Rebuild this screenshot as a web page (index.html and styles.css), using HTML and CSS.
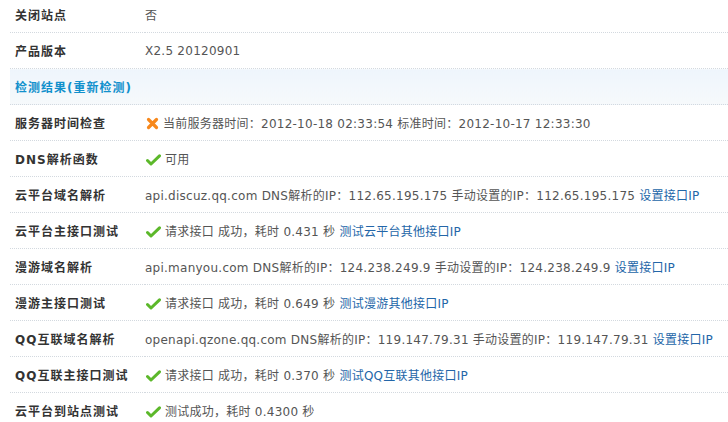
FILE: index.html
```html
<!DOCTYPE html>
<html lang="zh-CN">
<head>
  <meta charset="UTF-8" />
  <title>站点信息</title>
  <link rel="stylesheet" href="styles.css">
</head>
<body>
  <div class="wrap">
    <table class="tb">
      <tr>
        <td class="lbl">关闭站点</td>
        <td class="val">否</td>
      </tr>
      <tr>
        <td class="lbl">产品版本</td>
        <td class="val">X2.5 20120901</td>
      </tr>
      <tr class="partition">
        <td colspan="2">检测结果(重新检测)</td>
      </tr>
      <tr>
        <td class="lbl">服务器时间检查</td>
        <td class="val">
          <svg class="ico" width="13" height="13" viewBox="0 0 13 13"><path d="M2.5 2.5 L10.5 10.5 M10.5 2.5 L2.5 10.5" stroke="#f7881c" stroke-width="3.2" stroke-linecap="round"/></svg>当前服务器时间：2012-10-18 02:33:54 标准时间：2012-10-17 12:33:30
        </td>
      </tr>
      <tr>
        <td class="lbl">DNS解析函数</td>
        <td class="val"><svg class="ico" width="15" height="12" viewBox="0 0 15 12"><path d="M1.5 6.5 L5 10 L13.5 1.8" fill="none" stroke="#5cb82a" stroke-width="3" stroke-linecap="round" stroke-linejoin="round"/></svg>可用</td>
      </tr>
      <tr>
        <td class="lbl">云平台域名解析</td>
        <td class="val">api.discuz.qq.com DNS解析的IP：112.65.195.175 手动设置的IP：112.65.195.175 <a href="#">设置接口IP</a></td>
      </tr>
      <tr>
        <td class="lbl">云平台主接口测试</td>
        <td class="val"><svg class="ico" width="15" height="12" viewBox="0 0 15 12"><path d="M1.5 6.5 L5 10 L13.5 1.8" fill="none" stroke="#5cb82a" stroke-width="3" stroke-linecap="round" stroke-linejoin="round"/></svg>请求接口 成功，耗时 0.431 秒 <a href="#">测试云平台其他接口IP</a></td>
      </tr>
      <tr>
        <td class="lbl">漫游域名解析</td>
        <td class="val">api.manyou.com DNS解析的IP：124.238.249.9 手动设置的IP：124.238.249.9 <a href="#">设置接口IP</a></td>
      </tr>
      <tr>
        <td class="lbl">漫游主接口测试</td>
        <td class="val"><svg class="ico" width="15" height="12" viewBox="0 0 15 12"><path d="M1.5 6.5 L5 10 L13.5 1.8" fill="none" stroke="#5cb82a" stroke-width="3" stroke-linecap="round" stroke-linejoin="round"/></svg>请求接口 成功，耗时 0.649 秒 <a href="#">测试漫游其他接口IP</a></td>
      </tr>
      <tr>
        <td class="lbl">QQ互联域名解析</td>
        <td class="val">openapi.qzone.qq.com DNS解析的IP：119.147.79.31 手动设置的IP：119.147.79.31 <a href="#">设置接口IP</a></td>
      </tr>
      <tr>
        <td class="lbl">QQ互联主接口测试</td>
        <td class="val"><svg class="ico" width="15" height="12" viewBox="0 0 15 12"><path d="M1.5 6.5 L5 10 L13.5 1.8" fill="none" stroke="#5cb82a" stroke-width="3" stroke-linecap="round" stroke-linejoin="round"/></svg>请求接口 成功，耗时 0.370 秒 <a href="#">测试QQ互联其他接口IP</a></td>
      </tr>
      <tr>
        <td class="lbl">云平台到站点测试</td>
        <td class="val"><svg class="ico" width="15" height="12" viewBox="0 0 15 12"><path d="M1.5 6.5 L5 10 L13.5 1.8" fill="none" stroke="#5cb82a" stroke-width="3" stroke-linecap="round" stroke-linejoin="round"/></svg>测试成功，耗时 0.4300 秒</td>
      </tr>
    </table>
  </div>
</body>
</html>
```

FILE: styles.css
```css
body {
  margin: 0;
  background: #fff;
  font-family: "DejaVu Sans", "Noto Sans CJK SC", sans-serif;
  font-size: 12px;
  color: #555;
  overflow: hidden;
}
.wrap {
  margin: -3px 0 0 10px;
}
.tb {
  width: 100%;
  border-collapse: collapse;
}
.tb td {
  height: 35px;
  padding: 0 5px;
  border-bottom: 1px dotted #d3d9df;
  white-space: nowrap;
  vertical-align: middle;
}
.tb .lbl {
  width: 125px;
  color: #333;
  font-weight: bold;
  letter-spacing: 1px;
}
.tb .val {
  padding-left: 0;
  letter-spacing: 0.25px;
}
.partition td {
  color: #1190cc;
  font-weight: bold;
  letter-spacing: 1px;
  background: linear-gradient(#eef5fc, #f6f9fb);
}
.ico {
  vertical-align: -2px;
  margin: 0 4px 0 1px;
}
a {
  color: #2366a8;
  text-decoration: none;
}
```
